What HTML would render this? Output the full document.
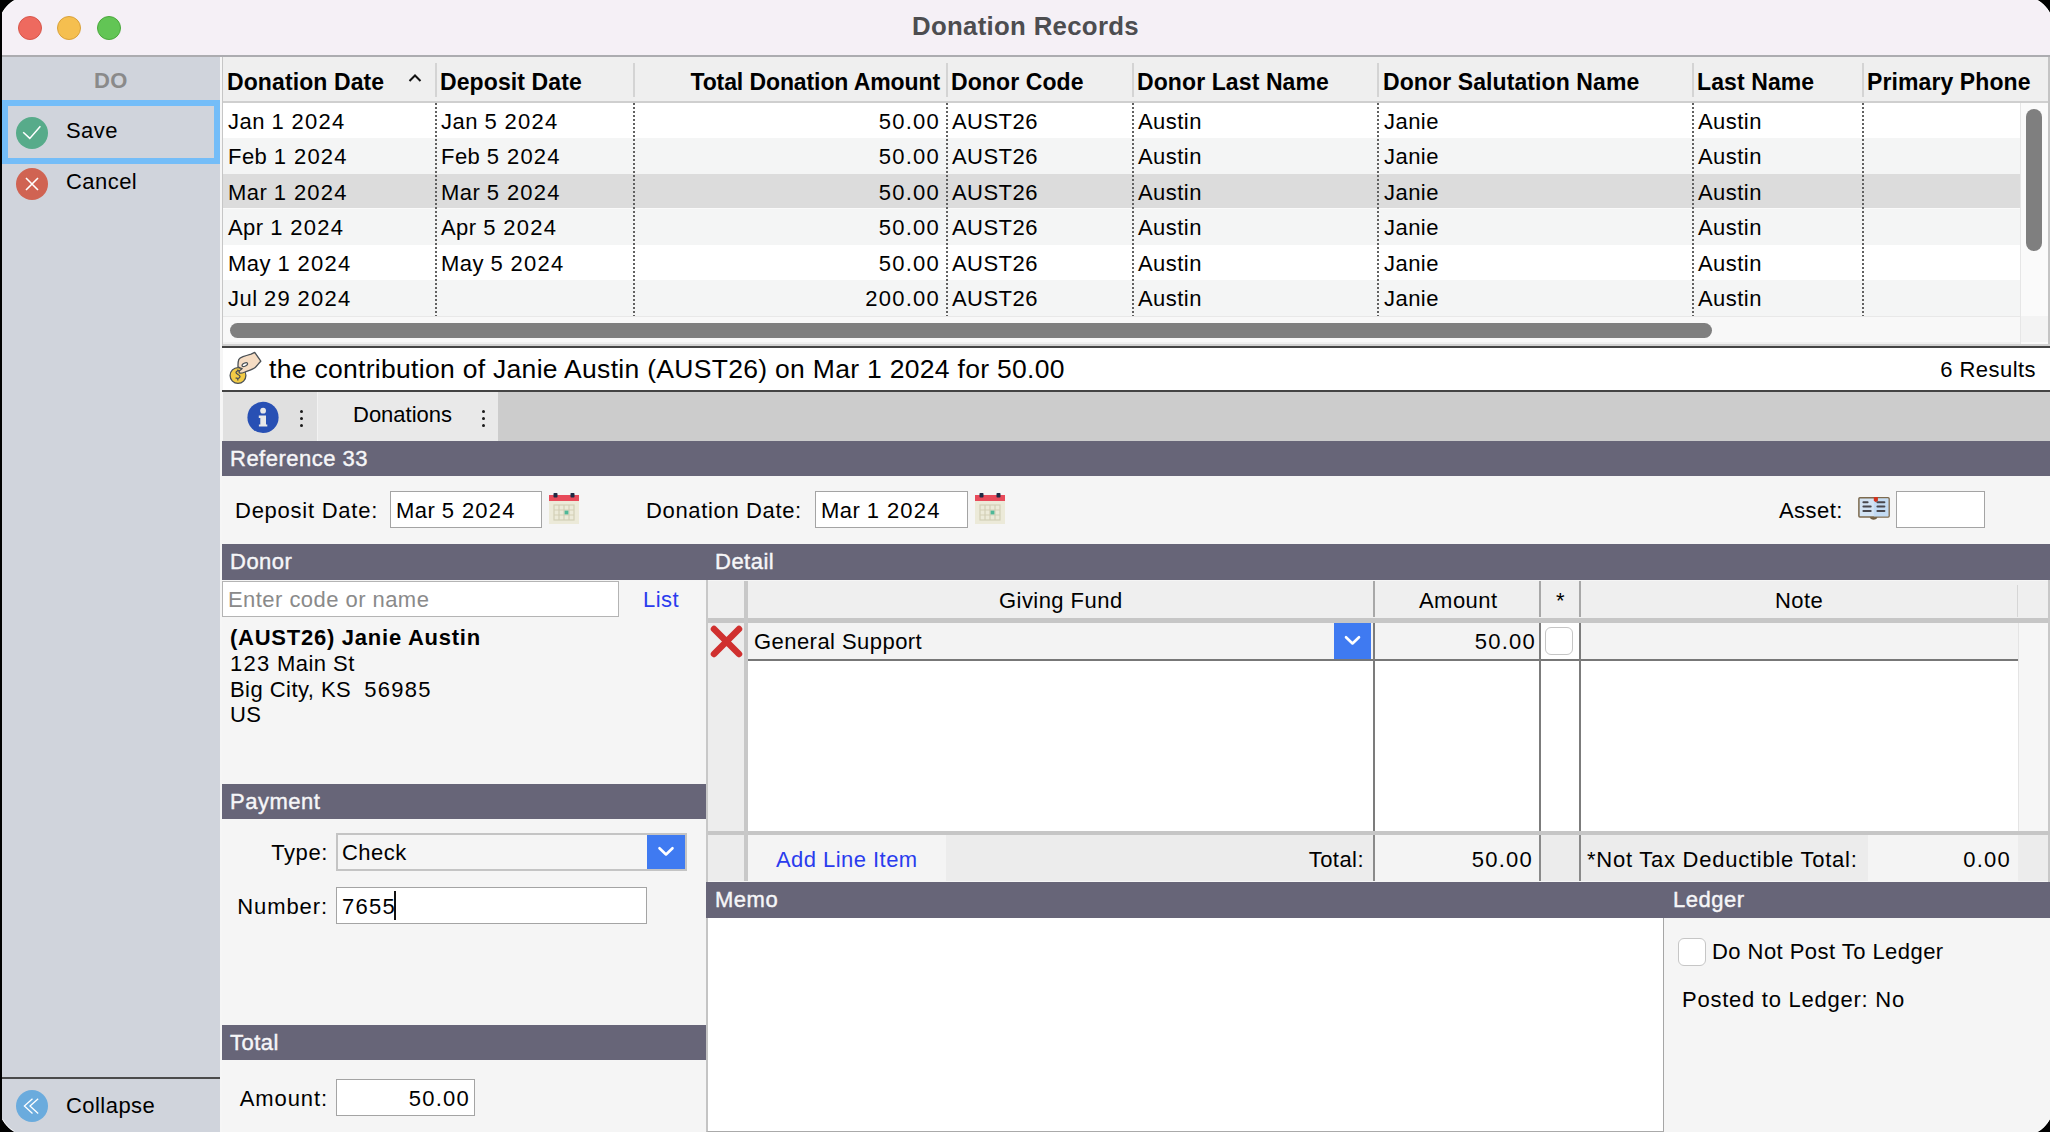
<!DOCTYPE html>
<html><head><meta charset="utf-8">
<style>
*{margin:0;padding:0;box-sizing:border-box}
html,body{width:2050px;height:1132px;overflow:hidden;background:#000}
body{font-family:"Liberation Sans",sans-serif;font-size:22px;color:#000;position:relative}
.a{position:absolute}
.t{position:absolute;white-space:nowrap;line-height:1;letter-spacing:.45px}
.th{font-size:23px;font-weight:bold;letter-spacing:.1px}
.d{letter-spacing:1.25px}
.b{font-weight:bold}
#win{position:absolute;left:0;top:0;width:2050px;height:1132px;overflow:hidden;background:#f5f5f5}
.hdr{position:absolute;background:#676578}
.ht{position:absolute;white-space:nowrap;line-height:1;color:#f6f6f8;font-size:22px;letter-spacing:.5px;-webkit-text-stroke:.4px #f6f6f8}
.inp{position:absolute;background:#fff;border:1px solid #a4a4a4}
.dot{position:absolute;width:2px;background:repeating-linear-gradient(to bottom,#616161 0,#616161 2px,transparent 2px,transparent 4px)}
.hsep{position:absolute;width:2px;background:#d4d4d4}
</style></head><body>
<div id="win">
  <!-- title bar -->
  <div class="a" style="left:0;top:0;width:2050px;height:55px;background:#f5f0f6"></div>
  <div class="a" style="left:0;top:55px;width:2050px;height:2px;background:#acacb0"></div>
  <div class="a" style="left:18px;top:16px;width:24px;height:24px;border-radius:50%;background:#ee6a5f;border:1px solid #d8564b"></div>
  <div class="a" style="left:57px;top:16px;width:24px;height:24px;border-radius:50%;background:#f5bf4f;border:1px solid #d9a13a"></div>
  <div class="a" style="left:97px;top:16px;width:24px;height:24px;border-radius:50%;background:#62c555;border:1px solid #4aa83c"></div>
  <div class="t b" style="left:912px;top:14px;font-size:25.8px;letter-spacing:.3px;color:#4d4d50">Donation Records</div>

  <!-- sidebar -->
  <div class="a" style="left:0;top:57px;width:220px;height:1075px;background:#d0d4dc"></div>
  <div class="t b" style="left:94px;top:70px;font-size:22px;color:#8a8a8a">DO</div>
  <div class="a" style="left:2px;top:100px;width:218px;height:64px;border:6px solid #74bdf8"></div>
  <div class="a" style="left:16px;top:117px;width:32px;height:32px;border-radius:50%;background:#57ab8a"></div>
  <div class="t" style="left:66px;top:120px">Save</div>
  <div class="a" style="left:16px;top:168px;width:32px;height:32px;border-radius:50%;background:#d06352"></div>
  <div class="t" style="left:66px;top:171px">Cancel</div>
  <div class="a" style="left:0;top:1077px;width:220px;height:2px;background:#4a4a4a"></div>
  <div class="a" style="left:16px;top:1090px;width:32px;height:32px;border-radius:50%;background:#6aabdd"></div>
  <div class="t" style="left:66px;top:1095px">Collapse</div>
  <div class="a" style="left:220px;top:57px;width:2px;height:1075px;background:#f6f6f6"></div>
  <div class="a" style="left:222px;top:57px;width:1.5px;height:289px;background:#c6c6c6"></div>

  <!-- sidebar icons -->
  <svg class="a" style="left:16px;top:117px" width="32" height="32" viewBox="0 0 32 32"><path d="M7.2 15.2 L13.8 21.4 L24.4 9.2" fill="none" stroke="#fff" stroke-width="1.5"/></svg>
  <svg class="a" style="left:16px;top:168px" width="32" height="32" viewBox="0 0 32 32"><path d="M10 10 L22 22 M22 10 L10 22" fill="none" stroke="#fff" stroke-width="1.6"/></svg>
  <svg class="a" style="left:16px;top:1090px" width="32" height="32" viewBox="0 0 32 32"><path d="M16.5 8.8 L8.4 16 L16.5 23.4 M22.2 8.8 L14 16 L22.2 23.4" fill="none" stroke="#fff" stroke-width="1.3"/></svg>

  <!-- TABLE -->
  <div class="a" style="left:223px;top:57px;width:1827px;height:44px;background:#efefef"></div>
  <div class="a" style="left:223px;top:101px;width:1827px;height:2px;background:#cfcfcf"></div>
  <div class="hsep" style="left:435px;top:63px;height:34px"></div>
  <div class="hsep" style="left:633px;top:63px;height:34px"></div>
  <div class="hsep" style="left:946px;top:63px;height:34px"></div>
  <div class="hsep" style="left:1132px;top:63px;height:34px"></div>
  <div class="hsep" style="left:1377px;top:63px;height:34px"></div>
  <div class="hsep" style="left:1692px;top:63px;height:34px"></div>
  <div class="hsep" style="left:1862px;top:63px;height:34px"></div>
  <div class="t th" style="left:227px;top:70.5px">Donation Date</div>
  <svg class="a" style="left:407px;top:72px" width="16" height="12" viewBox="0 0 16 12"><path d="M2.5 9 L8 3.5 L13.5 9" fill="none" stroke="#111" stroke-width="2"/></svg>
  <div class="t th" style="left:440px;top:70.5px">Deposit Date</div>
  <div class="t th" style="right:1110px;top:70.5px;letter-spacing:-.1px">Total Donation Amount</div>
  <div class="t th" style="left:951px;top:70.5px">Donor Code</div>
  <div class="t th" style="left:1137px;top:70.5px">Donor Last Name</div>
  <div class="t th" style="left:1383px;top:70.5px">Donor Salutation Name</div>
  <div class="t th" style="left:1697px;top:70.5px">Last Name</div>
  <div class="t th" style="left:1867px;top:70.5px">Primary Phone</div>

  <div class="a" style="left:223px;top:103px;width:1797px;height:213px;background:#fff"></div>
  <div class="a" style="left:223px;top:138px;width:1797px;height:36px;background:#f4f5f5"></div>
  <div class="a" style="left:223px;top:174px;width:1797px;height:34px;background:#dcdcdc"></div>
  <div class="a" style="left:223px;top:209px;width:1797px;height:36px;background:#f4f5f5"></div>
  <div class="a" style="left:223px;top:208px;width:1797px;height:1px;background:#fafafa"></div>
  <div class="a" style="left:223px;top:280px;width:1797px;height:36px;background:#f4f5f5"></div>
  <div class="dot" style="left:633px;top:103px;height:213px"></div>
  <div class="dot" style="left:435px;top:103px;height:213px"></div>
  <div class="dot" style="left:946px;top:103px;height:213px"></div>
  <div class="dot" style="left:1132px;top:103px;height:213px"></div>
  <div class="dot" style="left:1377px;top:103px;height:213px"></div>
  <div class="dot" style="left:1692px;top:103px;height:213px"></div>
  <div class="dot" style="left:1862px;top:103px;height:213px"></div>
  <div class="t" style="left:228px;top:111px">Jan <span class="d">1</span> <span class="d">2024</span></div>
  <div class="t" style="left:441px;top:111px">Jan <span class="d">5</span> <span class="d">2024</span></div>
  <div class="t" style="right:1110px;top:111px"><span class="d">50.00</span></div>
  <div class="t" style="left:952px;top:111px">AUST26</div>
  <div class="t" style="left:1138px;top:111px">Austin</div>
  <div class="t" style="left:1384px;top:111px">Janie</div>
  <div class="t" style="left:1698px;top:111px">Austin</div>
  <div class="t" style="left:228px;top:146px">Feb <span class="d">1</span> <span class="d">2024</span></div>
  <div class="t" style="left:441px;top:146px">Feb <span class="d">5</span> <span class="d">2024</span></div>
  <div class="t" style="right:1110px;top:146px"><span class="d">50.00</span></div>
  <div class="t" style="left:952px;top:146px">AUST26</div>
  <div class="t" style="left:1138px;top:146px">Austin</div>
  <div class="t" style="left:1384px;top:146px">Janie</div>
  <div class="t" style="left:1698px;top:146px">Austin</div>
  <div class="t" style="left:228px;top:182px">Mar <span class="d">1</span> <span class="d">2024</span></div>
  <div class="t" style="left:441px;top:182px">Mar <span class="d">5</span> <span class="d">2024</span></div>
  <div class="t" style="right:1110px;top:182px"><span class="d">50.00</span></div>
  <div class="t" style="left:952px;top:182px">AUST26</div>
  <div class="t" style="left:1138px;top:182px">Austin</div>
  <div class="t" style="left:1384px;top:182px">Janie</div>
  <div class="t" style="left:1698px;top:182px">Austin</div>
  <div class="t" style="left:228px;top:217px">Apr <span class="d">1</span> <span class="d">2024</span></div>
  <div class="t" style="left:441px;top:217px">Apr <span class="d">5</span> <span class="d">2024</span></div>
  <div class="t" style="right:1110px;top:217px"><span class="d">50.00</span></div>
  <div class="t" style="left:952px;top:217px">AUST26</div>
  <div class="t" style="left:1138px;top:217px">Austin</div>
  <div class="t" style="left:1384px;top:217px">Janie</div>
  <div class="t" style="left:1698px;top:217px">Austin</div>
  <div class="t" style="left:228px;top:253px">May <span class="d">1</span> <span class="d">2024</span></div>
  <div class="t" style="left:441px;top:253px">May <span class="d">5</span> <span class="d">2024</span></div>
  <div class="t" style="right:1110px;top:253px"><span class="d">50.00</span></div>
  <div class="t" style="left:952px;top:253px">AUST26</div>
  <div class="t" style="left:1138px;top:253px">Austin</div>
  <div class="t" style="left:1384px;top:253px">Janie</div>
  <div class="t" style="left:1698px;top:253px">Austin</div>
  <div class="t" style="left:228px;top:288px">Jul <span class="d">29</span> <span class="d">2024</span></div>
  <div class="t" style="right:1110px;top:288px"><span class="d">200.00</span></div>
  <div class="t" style="left:952px;top:288px">AUST26</div>
  <div class="t" style="left:1138px;top:288px">Austin</div>
  <div class="t" style="left:1384px;top:288px">Janie</div>
  <div class="t" style="left:1698px;top:288px">Austin</div>

  <!-- scrollbars -->
  <div class="a" style="left:2020px;top:103px;width:28px;height:241px;background:#fafafa;border-left:1px solid #e6e6e6"></div>
  <div class="a" style="left:2026px;top:109px;width:16px;height:142px;border-radius:8px;background:#7f7f7f"></div>
  <div class="a" style="left:223px;top:316px;width:1797px;height:28px;background:#f8f8f8;border-top:1px solid #e8e8e8"></div>
  <div class="a" style="left:230px;top:323px;width:1482px;height:15px;border-radius:8px;background:#7f7f7f"></div>
  <div class="a" style="left:2021px;top:316px;width:27px;height:26px;background:#f3f3f3"></div>
  <div class="a" style="left:2048px;top:57px;width:2px;height:290px;background:#c4c4c4"></div>
  <div class="a" style="left:223px;top:342px;width:1797px;height:2px;background:#f0f0f0"></div>
  <div class="a" style="left:223px;top:344px;width:1827px;height:2px;background:#d2d2d2"></div>
  <div class="a" style="left:222px;top:346px;width:1828px;height:2px;background:#444"></div>

  <!-- contribution bar -->
  <div class="a" style="left:223px;top:348px;width:1827px;height:42px;background:#fff"></div>
  <div class="a" style="left:222px;top:390px;width:1828px;height:2px;background:#444"></div>
  <svg class="a" style="left:225px;top:348px" width="44" height="42" viewBox="0 0 44 42">
    <circle cx="13" cy="27.5" r="7.9" fill="#f2cb45" stroke="#4a5055" stroke-width="1.3"/>
    <path d="M15.2 23.2 C13.8 22.2 11 22.6 11 24.6 C11 26.6 15 26.4 15 28.6 C15 30.6 12 30.8 10.6 29.8 M12.8 21.5 V23 M12.8 30.6 V32.4" fill="none" stroke="#4a5055" stroke-width="1.3"/>
    <path d="M29.7 4.3 L35.8 13.2 C33.5 15.5 32 18 30.2 19.5 C28 21.3 24 22.5 20 24 C17.5 25 15.2 25.4 14.5 25 C13.8 24.2 14 22.8 15.5 22 L17.2 20.6 C15.5 20.2 14 19.6 13 18.8 C12.9 16 13.2 13.2 13.8 11.6 C14.5 10.1 16 9.4 18 8.6 C21 7.6 24 6.7 26 6.1 C27.5 5.6 28.5 4.9 29.7 4.3 Z" fill="#f5dcc3" stroke="#4a5055" stroke-width="1.3" stroke-linejoin="round"/>
    <ellipse cx="19.8" cy="16.6" rx="3" ry="1.5" transform="rotate(-28 19.8 16.6)" fill="#fff" stroke="#4a5055" stroke-width="1.2"/>
  </svg>
  <div class="t" style="left:269px;top:356px;font-size:26.5px;letter-spacing:.3px">the contribution of Janie Austin (AUST26) on Mar 1 2024 for 50.00</div>
  <div class="t" style="right:14px;top:359px">6 Results</div>

  <!-- tabs -->
  <div class="a" style="left:223px;top:392px;width:1827px;height:49px;background:#cccccc"></div>
  <div class="a" style="left:223px;top:392px;width:94px;height:49px;background:#e0e0e0"></div>
  <div class="a" style="left:317px;top:392px;width:181px;height:49px;background:#e9e9e9;border-left:1px solid #f2f2f2"></div>
  <svg class="a" style="left:247px;top:401px" width="32" height="32" viewBox="0 0 32 32">
    <circle cx="16" cy="16.4" r="15.6" fill="#2850b4"/>
    <circle cx="16.1" cy="9.7" r="2.9" fill="#e8e8e8"/>
    <path d="M11.8 14.4 H19 V23.6 H20.3 V25.4 H11.9 V23.6 H13.3 V17 H11.8 Z" fill="#e8e8e8"/>
  </svg>
  <div class="t" style="left:353px;top:404px;letter-spacing:0">Donations</div>
  <div class="a" style="left:299.5px;top:409.5px;width:3px;height:3px;border-radius:50%;background:#1a1a1a"></div>
  <div class="a" style="left:299.5px;top:416.5px;width:3px;height:3px;border-radius:50%;background:#1a1a1a"></div>
  <div class="a" style="left:299.5px;top:423.5px;width:3px;height:3px;border-radius:50%;background:#1a1a1a"></div>
  <div class="a" style="left:481.5px;top:409.5px;width:3px;height:3px;border-radius:50%;background:#1a1a1a"></div>
  <div class="a" style="left:481.5px;top:416.5px;width:3px;height:3px;border-radius:50%;background:#1a1a1a"></div>
  <div class="a" style="left:481.5px;top:423.5px;width:3px;height:3px;border-radius:50%;background:#1a1a1a"></div>

  <!-- reference header -->
  <div class="hdr" style="left:222px;top:441px;width:1828px;height:35px"></div>
  <div class="ht" style="left:230px;top:448px">Reference 33</div>

  <!-- date row -->
  <div class="t" style="left:235px;top:500px;letter-spacing:.75px">Deposit Date:</div>
  <div class="inp" style="left:390px;top:491px;width:152px;height:37px"></div>
  <div class="t" style="left:396px;top:500px">Mar <span class="d">5</span> <span class="d">2024</span></div>
  <svg class="a cal" style="left:549px;top:493px" width="30" height="31" viewBox="0 0 30 31"><rect x="0" y="2" width="30" height="29" fill="#ecead9"/><rect x="0" y="2" width="30" height="6" fill="#e84a5a"/><rect x="4.5" y="0" width="4" height="4.5" rx="0.8" fill="#1f2a44"/><rect x="21.5" y="0" width="4" height="4.5" rx="0.8" fill="#1f2a44"/><g fill="none" stroke="#d3cfb6" stroke-width="1.2"><rect x="5" y="12" width="20" height="15"/><path d="M10 12v15M15 12v15M20 12v15M5 17h20M5 22h20"/></g><rect x="15.6" y="17.6" width="3.8" height="3.8" fill="#4fb898"/></svg>
  <div class="t" style="left:646px;top:500px;letter-spacing:.65px">Donation Date:</div>
  <div class="inp" style="left:815px;top:491px;width:153px;height:37px"></div>
  <div class="t" style="left:821px;top:500px">Mar <span class="d">1</span> <span class="d">2024</span></div>
  <svg class="a cal" style="left:975px;top:493px" width="30" height="31" viewBox="0 0 30 31"><rect x="0" y="2" width="30" height="29" fill="#ecead9"/><rect x="0" y="2" width="30" height="6" fill="#e84a5a"/><rect x="4.5" y="0" width="4" height="4.5" rx="0.8" fill="#1f2a44"/><rect x="21.5" y="0" width="4" height="4.5" rx="0.8" fill="#1f2a44"/><g fill="none" stroke="#d3cfb6" stroke-width="1.2"><rect x="5" y="12" width="20" height="15"/><path d="M10 12v15M15 12v15M20 12v15M5 17h20M5 22h20"/></g><rect x="15.6" y="17.6" width="3.8" height="3.8" fill="#4fb898"/></svg>
  <div class="t" style="left:1779px;top:500px">Asset:</div>
  <svg class="a" style="left:1858px;top:496px" width="32" height="25" viewBox="0 0 32 25">
    <path d="M11.8 21 C12 24.5 19.2 24.5 19.4 21 Z" fill="#6f5d42"/>
    <rect x="0.9" y="1.7" width="30.2" height="19.4" rx="1" fill="#d3e3f3" stroke="#7d6a4e" stroke-width="1.5"/>
    <rect x="15.9" y="2.5" width="14.4" height="17.9" fill="#c3dbf3"/>
    <path d="M15.8 1 H19.9 V4.8 L17.85 6.2 L15.8 4.8 Z" fill="#d0341e"/>
    <path d="M5.4 6.3 H9.6 M5.4 10.6 H12.7 M5.4 14.9 H12.7 M19.4 6.3 H26.4 M19.4 10.6 H26.4 M19.4 14.9 H26.4" stroke="#48474d" stroke-width="2" stroke-linecap="round"/>
  </svg>
  <div class="inp" style="left:1896px;top:491px;width:89px;height:37px"></div>

  <!-- section headers -->
  <div class="hdr" style="left:222px;top:544px;width:1828px;height:36px"></div>
  <div class="ht" style="left:230px;top:551px">Donor</div>
  <div class="ht" style="left:715px;top:551px">Detail</div>

  <!-- donor -->
  <div class="inp" style="left:222px;top:581px;width:397px;height:36px;border-color:#b4b4b4"></div>
  <div class="t" style="left:228px;top:589px;color:#8a8a8a">Enter code or name</div>
  <div class="t" style="left:643px;top:589px;color:#2a3cee">List</div>
  <div class="t b" style="left:230px;top:627px;letter-spacing:.75px">(AUST26) Janie Austin</div>
  <div class="t" style="left:230px;top:653px"><span class="d">123</span> Main St</div>
  <div class="t" style="left:230px;top:679px;white-space:pre">Big City, KS  <span class="d">56985</span></div>
  <div class="t" style="left:230px;top:704px">US</div>

  <!-- payment -->
  <div class="hdr" style="left:222px;top:784px;width:484px;height:35px"></div>
  <div class="ht" style="left:230px;top:791px">Payment</div>
  <div class="t" style="right:1722px;top:842px;letter-spacing:.6px">Type:</div>
  <div class="a" style="left:336px;top:833px;width:351px;height:38px;background:#f5f5f5;border:2px solid #c4c4c4"></div>
  <div class="a" style="left:647px;top:835px;width:38px;height:34px;background:#3f7af1"></div>
  <svg class="a" style="left:647px;top:835px" width="38" height="34" viewBox="0 0 38 34"><path d="M12.5 13.2 L19 19.5 L25.5 13.2" fill="none" stroke="#fff" stroke-width="2.6" stroke-linecap="round" stroke-linejoin="round"/></svg>
  <div class="t" style="left:342px;top:842px">Check</div>
  <div class="t" style="right:1722px;top:896px;letter-spacing:.9px">Number:</div>
  <div class="inp" style="left:336px;top:887px;width:311px;height:37px"></div>
  <div class="t" style="left:342px;top:896px"><span class="d">7655</span></div>
  <div class="a" style="left:394px;top:891px;width:2px;height:29px;background:#111"></div>

  <!-- total -->
  <div class="hdr" style="left:222px;top:1025px;width:484px;height:35px"></div>
  <div class="ht" style="left:230px;top:1032px">Total</div>
  <div class="t" style="right:1722px;top:1088px;letter-spacing:.9px">Amount:</div>
  <div class="inp" style="left:336px;top:1079px;width:139px;height:37px"></div>
  <div class="t" style="right:1580px;top:1088px"><span class="d">50.00</span></div>

  <!-- detail grid -->
  <div class="a" style="left:706px;top:580px;width:2px;height:302px;background:#c8c8c8"></div>
  <div class="a" style="left:708px;top:581px;width:1342px;height:37px;background:#efefef"></div>
  <div class="a" style="left:708px;top:618px;width:1342px;height:5px;background:#c6c6c6"></div>
  <div class="a" style="left:708px;top:623px;width:36px;height:208px;background:#ededed"></div>
  <div class="a" style="left:744px;top:581px;width:4px;height:300px;background:#c8c8c8"></div>
  <div class="a" style="left:748px;top:623px;width:1270px;height:36px;background:#f3f3f3"></div>
  <div class="a" style="left:1541px;top:623px;width:38px;height:36px;background:#fff"></div>
  <div class="a" style="left:748px;top:659px;width:1270px;height:2px;background:#777"></div>
  <div class="a" style="left:748px;top:661px;width:1270px;height:170px;background:#fff"></div>
  <div class="a" style="left:1372.5px;top:581px;width:2px;height:36px;background:#a8a8a8"></div>
  <div class="a" style="left:1538.5px;top:581px;width:2px;height:36px;background:#a8a8a8"></div>
  <div class="a" style="left:1578.5px;top:581px;width:2px;height:36px;background:#a8a8a8"></div>
  <div class="a" style="left:2017px;top:585px;width:1px;height:32px;background:#d6d6d6"></div>
  <div class="a" style="left:1372.5px;top:623px;width:2px;height:208px;background:#7c7c7c"></div>
  <div class="a" style="left:1538.5px;top:623px;width:2px;height:208px;background:#7c7c7c"></div>
  <div class="a" style="left:1578.5px;top:623px;width:2px;height:208px;background:#7c7c7c"></div>
  <div class="a" style="left:2018px;top:623px;width:30px;height:208px;background:#f6f6f6;border-left:1px solid #e4e4e4"></div>
  <div class="a" style="left:2048px;top:580px;width:2px;height:302px;background:#c8c8c8"></div>
  <div class="t" style="left:999px;top:590px">Giving Fund</div>
  <div class="t" style="left:1419px;top:590px">Amount</div>
  <div class="t" style="left:1556px;top:590px">*</div>
  <div class="t" style="left:1775px;top:590px">Note</div>
  <svg class="a" style="left:708px;top:623px" width="36" height="36" viewBox="0 0 36 36"><path d="M6 6 L31 31 M31 6 L6 31" stroke="#d0302f" stroke-width="6.5" stroke-linecap="round"/></svg>
  <div class="t" style="left:754px;top:631px">General Support</div>
  <div class="a" style="left:1334px;top:623px;width:37px;height:36px;background:#3f7af1"></div>
  <svg class="a" style="left:1334px;top:623px" width="37" height="36" viewBox="0 0 37 36"><path d="M12 14.2 L18.5 20.5 L25 14.2" fill="none" stroke="#fff" stroke-width="2.6" stroke-linecap="round" stroke-linejoin="round"/></svg>
  <div class="t" style="right:514px;top:631px"><span class="d">50.00</span></div>
  <div class="a" style="left:1545px;top:627px;width:28px;height:28px;border-radius:6px;background:#fff;border:1px solid #c6c6c6"></div>
  <div class="a" style="left:708px;top:831px;width:1342px;height:4px;background:#c6c6c6"></div>
  <div class="a" style="left:708px;top:835px;width:1340px;height:46px;background:#ececec"></div>
  <div class="a" style="left:748px;top:835px;width:198px;height:46px;background:#f4f4f4"></div>
  <div class="a" style="left:1374px;top:835px;width:165px;height:46px;background:#f4f4f4"></div>
  <div class="a" style="left:1868px;top:835px;width:150px;height:46px;background:#f4f4f4"></div>
  <div class="a" style="left:744px;top:831px;width:4px;height:50px;background:#c8c8c8"></div>
  <div class="a" style="left:1372.5px;top:835px;width:2px;height:46px;background:#8a8a8a"></div>
  <div class="a" style="left:1538.5px;top:835px;width:2px;height:46px;background:#8a8a8a"></div>
  <div class="a" style="left:1578.5px;top:835px;width:2px;height:46px;background:#8a8a8a"></div>
  <div class="t" style="left:776px;top:849px;color:#2a3cee">Add Line Item</div>
  <div class="t" style="right:686px;top:849px">Total:</div>
  <div class="t" style="right:517px;top:849px"><span class="d">50.00</span></div>
  <div class="t" style="left:1587px;top:849px;letter-spacing:.75px">*Not Tax Deductible Total:</div>
  <div class="t" style="right:39px;top:849px"><span class="d">0.00</span></div>

  <!-- memo / ledger -->
  <div class="hdr" style="left:706px;top:882px;width:1344px;height:36px"></div>
  <div class="ht" style="left:715px;top:889px">Memo</div>
  <div class="ht" style="left:1673px;top:889px">Ledger</div>
  <div class="a" style="left:706px;top:918px;width:958px;height:214px;background:#fff;border-right:1px solid #a6a6a6;border-left:2px solid #c4c4c4;border-bottom:1px solid #aaa"></div>
  <div class="a" style="left:1678px;top:938px;width:28px;height:28px;border-radius:6px;background:#fff;border:1px solid #c6c6c6"></div>
  <div class="t" style="left:1712px;top:941px">Do Not Post To Ledger</div>
  <div class="t" style="left:1682px;top:989px;letter-spacing:.75px">Posted to Ledger: No</div>

  <!-- CONTENT -->
</div>
<svg class="a" style="left:0;top:0" width="2050" height="1132" viewBox="0 0 2050 1132">
  <path d="M0 0 H14.5 Q7 4 2 12.8 V0 Z" fill="#000"/>
  <path d="M2050 0 H2037.5 Q2045 4 2050 12.8 Z" fill="#000"/>
  <path d="M2050 1132 H2037.5 Q2045 1128 2050 1119.2 Z" fill="#000"/>
  <path d="M0 1132 H14.5 Q7 1128 2 1119.2 V1132 Z" fill="#000"/>
  <path d="M14.5 0.5 Q7 4.5 2.5 12.8" fill="none" stroke="#fff" stroke-width="1" opacity=".8"/>
  <path d="M2037.5 0.5 Q2045 4.5 2049.5 12.8" fill="none" stroke="#fff" stroke-width="1" opacity=".8"/>
  <path d="M2037.5 1131.5 Q2045 1127.5 2049.5 1119.2" fill="none" stroke="#fff" stroke-width="1" opacity=".8"/>
  <path d="M14.5 1131.5 Q7 1127.5 2.5 1119.2" fill="none" stroke="#fff" stroke-width="1" opacity=".8"/>
</svg>
<div class="a" style="left:0;top:0;width:2px;height:1132px;background:#000"></div>
</body></html>
